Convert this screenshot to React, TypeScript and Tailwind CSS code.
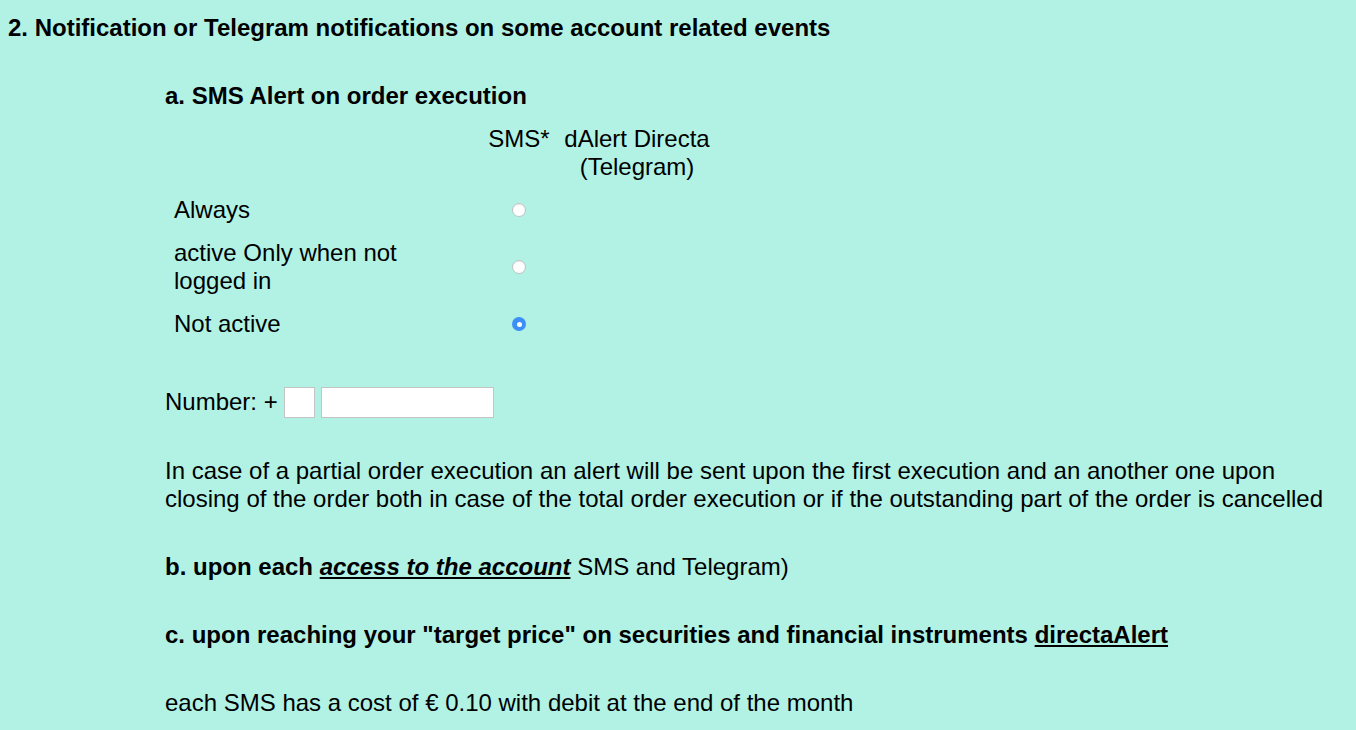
export default function App() {
  const rows = [
    { label: "Always", checked: false },
    { label: "active Only when not logged in", checked: false },
    { label: "Not active", checked: true },
  ];

  return (
    <div className="min-h-[730px] bg-[#b1f2e5] pt-[14px] text-[24px] leading-[28px] text-black [font-family:'Liberation_Sans',Arial,sans-serif]">
      <h2 className="pl-[8px] font-bold">
        2. Notification or Telegram notifications on some account related events
      </h2>

      <div className="pl-[165px] pt-[40px]">
        <h3 className="font-bold">a. SMS Alert on order execution</h3>

        <table className="mt-[14px] border-separate border-spacing-x-0 border-spacing-y-[1px]">
          <thead>
            <tr>
              <th className="w-[318px]" />
              <th className="w-[72px] pb-[7px] align-top font-normal">SMS*</th>
              <th className="w-[164px] pb-[7px] align-top font-normal">
                dAlert Directa (Telegram)
              </th>
            </tr>
          </thead>
          <tbody>
            {rows.map((row) => (
              <tr key={row.label}>
                <td className="py-[7px] pl-[9px]">
                  <div className="w-[240px]">{row.label}</div>
                </td>
                <td className="text-center align-middle">
                  {row.checked ? (
                    <span className="mx-auto block h-[14px] w-[14px] rounded-full bg-[#3b8ff6] p-[4.5px]">
                      <span className="block h-[5px] w-[5px] rounded-full bg-white" />
                    </span>
                  ) : (
                    <span className="mx-auto block h-[14px] w-[14px] rounded-full border border-[#c2c2c2] bg-white shadow-[inset_0_1px_1px_rgba(0,0,0,0.08)]" />
                  )}
                </td>
                <td />
              </tr>
            ))}
          </tbody>
        </table>

        <div className="mt-[40px] flex items-center gap-[6px]">
          <span>Number: +</span>
          <input className="mt-[1px] h-[31px] w-[31px] border border-[#c4c4c4] bg-white" />
          <input className="mt-[1px] h-[31px] w-[173px] border border-[#c4c4c4] bg-white" />
        </div>

        <p className="mt-[39px] pr-[20px]">
          In case of a partial order execution an alert will be sent upon the first execution and an another one upon closing of the order both in case of the total order execution or if the outstanding part of the order is cancelled
        </p>

        <p className="mt-[40px] font-bold">
          b. upon each{" "}
          <a className="italic underline">access to the account</a>{" "}
          <span className="font-normal">SMS and Telegram)</span>
        </p>

        <p className="mt-[40px] font-bold">
          c. upon reaching your "target price" on securities and financial instruments{" "}
          <a className="underline">directaAlert</a>
        </p>

        <p className="mt-[40px]">each SMS has a cost of € 0.10 with debit at the end of the month</p>
      </div>
    </div>
  );
}
